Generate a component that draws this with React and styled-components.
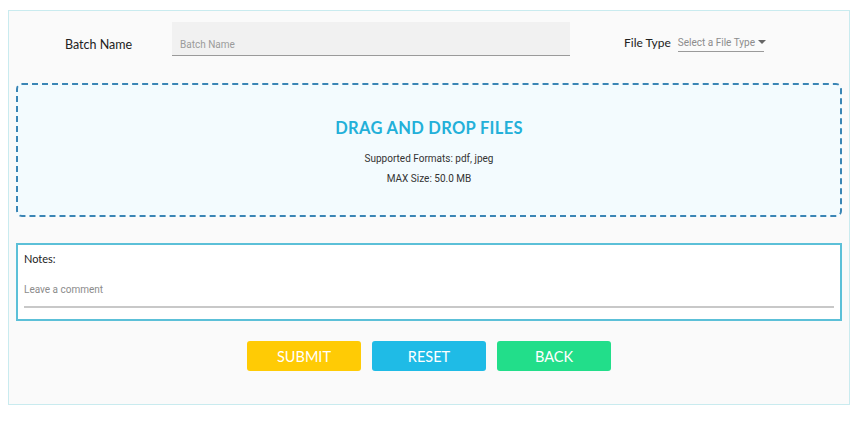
import styled, { createGlobalStyle } from 'styled-components'

const GlobalStyle = createGlobalStyle`
    body {
        margin: 8px;
        background: #ffffff;
        font-family: Lato, "Noto Sans", sans-serif;
    }
`

const Card = styled.section`
    margin-top: 2px;
    width: 842px;
    height: 395px;
    box-sizing: border-box;
    border: 1px solid #c9ebef;
    background: #fafafa;
    padding: 11px 7px 0 7px;
`

const TopRow = styled.div`
    display: flex;
    align-items: center;
    height: 34px;
`

const Label = styled.label`
    font-size: 12px;
    color: #222;
    font-family: Lato, "Noto Sans", sans-serif;
    font-weight: 400;
    white-space: nowrap;
`

const BatchLabel = styled(Label)`
    width: 107px;
    padding-left: 49px;
    padding-top: 10px;
    font-size: 12.5px;
`

const TextInput = styled.input`
    width: 398px;
    height: 34px;
    box-sizing: border-box;
    border: none;
    border-bottom: 1px solid #9a9a9a;
    background: #f1f1f1;
    padding: 11px 8px 0 8px;
    font-family: Roboto, sans-serif;
    font-size: 10px;
    outline: none;
    &::placeholder { color: #9b9b9b; }
`

const FileTypeGroup = styled.div`
    margin-left: 54px;
    display: flex;
    align-items: center;
    gap: 7px;
    padding-top: 7px;
`

const Select = styled.div`
    width: 86px;
    box-sizing: border-box;
    border-bottom: 1px solid #9a9a9a;
    padding-bottom: 3px;
    font-family: Roboto, sans-serif;
    font-size: 10px;
    color: #8c8c8c;
    white-space: nowrap;
    display: flex;
    align-items: center;
    gap: 3px;
    margin-top: 3px;
`

const Caret = styled.span`
    width: 0;
    height: 0;
    border-left: 4px solid transparent;
    border-right: 4px solid transparent;
    border-top: 4px solid #666;
`

const DropZone = styled.div`
    margin-top: 27px;
    height: 134px;
    box-sizing: border-box;
    border: 2px dashed #3a85b5;
    border-radius: 6px;
    background: #f3fbfe;
    display: flex;
    flex-direction: column;
    align-items: center;
    padding-top: 33px;
`

const DropTitle = styled.h2`
    margin: 0;
    font-family: Lato, sans-serif;
    font-size: 16.5px;
    font-weight: 700;
    letter-spacing: 0.3px;
    color: #23b0d9;
`

const Info = styled.p`
    margin: ${p => p.$top}px 0 0;
    font-family: Roboto, sans-serif;
    font-size: 10px;
    color: #333;
`

const NotesBox = styled.div`
    margin-top: 26px;
    height: 78px;
    box-sizing: border-box;
    border: 2px solid #5cc0d8;
    background: #ffffff;
    padding: 7px 6px 0 6px;
`

const NotesLabel = styled.div`
    font-size: 11px;
    color: #222;
`

const CommentInput = styled.input`
    margin-top: 19px;
    width: 100%;
    box-sizing: border-box;
    border: none;
    border-bottom: 2px solid #c8c8c8;
    background: transparent;
    padding: 0 0 11px 0;
    font-family: Roboto, sans-serif;
    font-size: 10px;
    outline: none;
    &::placeholder { color: #8c8c8c; }
`

const Actions = styled.div`
    display: flex;
    justify-content: center;
    gap: 11px;
    margin-top: 20px;
`

const Button = styled.button`
    width: 114px;
    height: 30px;
    border: none;
    border-radius: 3px;
    background: ${p => p.$bg};
    color: #ffffff;
    font-family: Lato, sans-serif;
    font-size: 14.5px;
    font-weight: 400;
    cursor: pointer;
`

export default function App() {
    return (
        <>
            <GlobalStyle />
            <Card>
                <TopRow>
                    <BatchLabel>Batch Name</BatchLabel>
                    <TextInput placeholder="Batch Name" />
                    <FileTypeGroup>
                        <Label>File Type</Label>
                        <Select>
                            Select a File Type <Caret />
                        </Select>
                    </FileTypeGroup>
                </TopRow>
                <DropZone>
                    <DropTitle>DRAG AND DROP FILES</DropTitle>
                    <Info $top={15}>Supported Formats: pdf, jpeg</Info>
                    <Info $top={9}>MAX Size: 50.0 MB</Info>
                </DropZone>
                <NotesBox>
                    <NotesLabel>Notes:</NotesLabel>
                    <CommentInput placeholder="Leave a comment" />
                </NotesBox>
                <Actions>
                    <Button $bg="#ffcb05">SUBMIT</Button>
                    <Button $bg="#1fbbe6">RESET</Button>
                    <Button $bg="#22de8a">BACK</Button>
                </Actions>
            </Card>
        </>
    )
}
